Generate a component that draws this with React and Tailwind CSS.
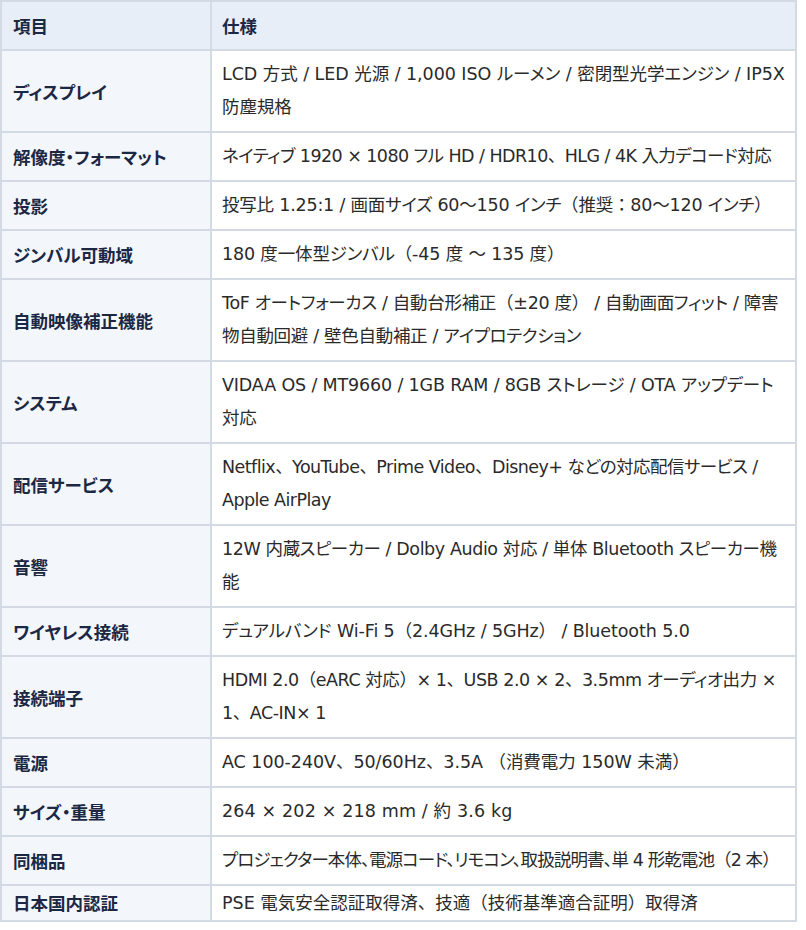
import React from "react";

const rows = [
  ["ディスプレイ", ["LCD 方式 / LED 光源 / 1,000 ISO ルーメン / 密閉型光学エンジン / IP5X", "防塵規格"], "tracking-[-0.05px]"],
  ["解像度・フォーマット", ["ネイティブ 1920 × 1080 フル HD / HDR10、HLG / 4K 入力デコード対応"], "tracking-[-0.55px]"],
  ["投影", ["投写比 1.25:1 / 画面サイズ 60〜150 インチ（推奨：80〜120 インチ）"], "tracking-[-0.2px]"],
  ["ジンバル可動域", ["180 度一体型ジンバル（-45 度 〜 135 度）"], "tracking-[-0.15px]"],
  ["自動映像補正機能", ["ToF オートフォーカス / 自動台形補正（±20 度） / 自動画面フィット / 障害", "物自動回避 / 壁色自動補正 / アイプロテクション"], "tracking-[-0.3px]"],
  ["システム", ["VIDAA OS / MT9660 / 1GB RAM / 8GB ストレージ / OTA アップデート", "対応"], "tracking-[-0.15px]"],
  ["配信サービス", ["Netflix、YouTube、Prime Video、Disney+ などの対応配信サービス /", "Apple AirPlay"], "tracking-[-0.55px]"],
  ["音響", ["12W 内蔵スピーカー / Dolby Audio 対応 / 単体 Bluetooth スピーカー機", "能"], "tracking-[-0.4px]"],
  ["ワイヤレス接続", ["デュアルバンド Wi-Fi 5（2.4GHz / 5GHz） / Bluetooth 5.0"], "tracking-[-0.1px]"],
  ["接続端子", ["HDMI 2.0（eARC 対応）× 1、USB 2.0 × 2、3.5mm オーディオ出力 ×", "1、AC-IN× 1"], "tracking-[-0.45px]"],
  ["電源", ["AC 100-240V、50/60Hz、3.5A （消費電力 150W 未満）"], "tracking-[-0.05px]"],
  ["サイズ・重量", ["264 × 202 × 218 mm / 約 3.6 kg"], "tracking-[0.15px]"],
  ["同梱品", ["プロジェクター本体、電源コード、リモコン、取扱説明書、単 4 形乾電池（2 本）"], "tracking-[-0.9px]", true],
  ["日本国内認証", ["PSE 電気安全認証取得済、技適（技術基準適合証明）取得済"], "tracking-normal"],
];

function renderLine(l, tight) {
  const re = tight ? /([（）])/ : /([（）：、〜])/;
  return l.split(re).map((part, i) =>
    i % 2 === 1 ? (
      <span key={i} className="[font-feature-settings:normal]">
        {part}
      </span>
    ) : (
      <React.Fragment key={i}>{part}</React.Fragment>
    )
  );
}

export default function App() {
  return (
    <div className="bg-white w-[806px] h-[930px] font-['DejaVu_Sans','Noto_Sans_CJK_JP',sans-serif] [font-feature-settings:'palt'] text-[17.5px]">
      <div className="w-[797px] bg-[#d3dae4] p-[2px] grid grid-cols-[208px_583px] gap-[2px]">
        <div className="bg-[#e7eef8] px-[11px] py-[7px] leading-[33px] font-bold text-[#1b2743] font-['Noto_Sans_CJK_JP',sans-serif]">項目</div>
        <div className="bg-[#e7eef8] px-[10px] py-[7px] leading-[33px] font-bold text-[#1b2743] font-['Noto_Sans_CJK_JP',sans-serif]">仕様</div>
        {rows.map(([label, lines, track, tight], i) => {
          const last = i === rows.length - 1;
          return (
            <React.Fragment key={label}>
              <div
                className={
                  "bg-[#f3f6fa] px-[11px] flex items-center font-bold text-[#1b2743] font-['Noto_Sans_CJK_JP',sans-serif] " +
                  (last ? "py-0 leading-[34px]" : "py-[7px] leading-[33px]")
                }
              >
                {label}
              </div>
              <div
                className={
                  "bg-white px-[10px] text-[#2a2a2a] " +
                  (last ? "py-0 leading-[34px] " : "py-[7px] leading-[33px] ") +
                  track
                }
              >
                {lines.map((l) => (
                  <div key={l} className="whitespace-nowrap">
                    {renderLine(l, tight)}
                  </div>
                ))}
              </div>
            </React.Fragment>
          );
        })}
      </div>
    </div>
  );
}
